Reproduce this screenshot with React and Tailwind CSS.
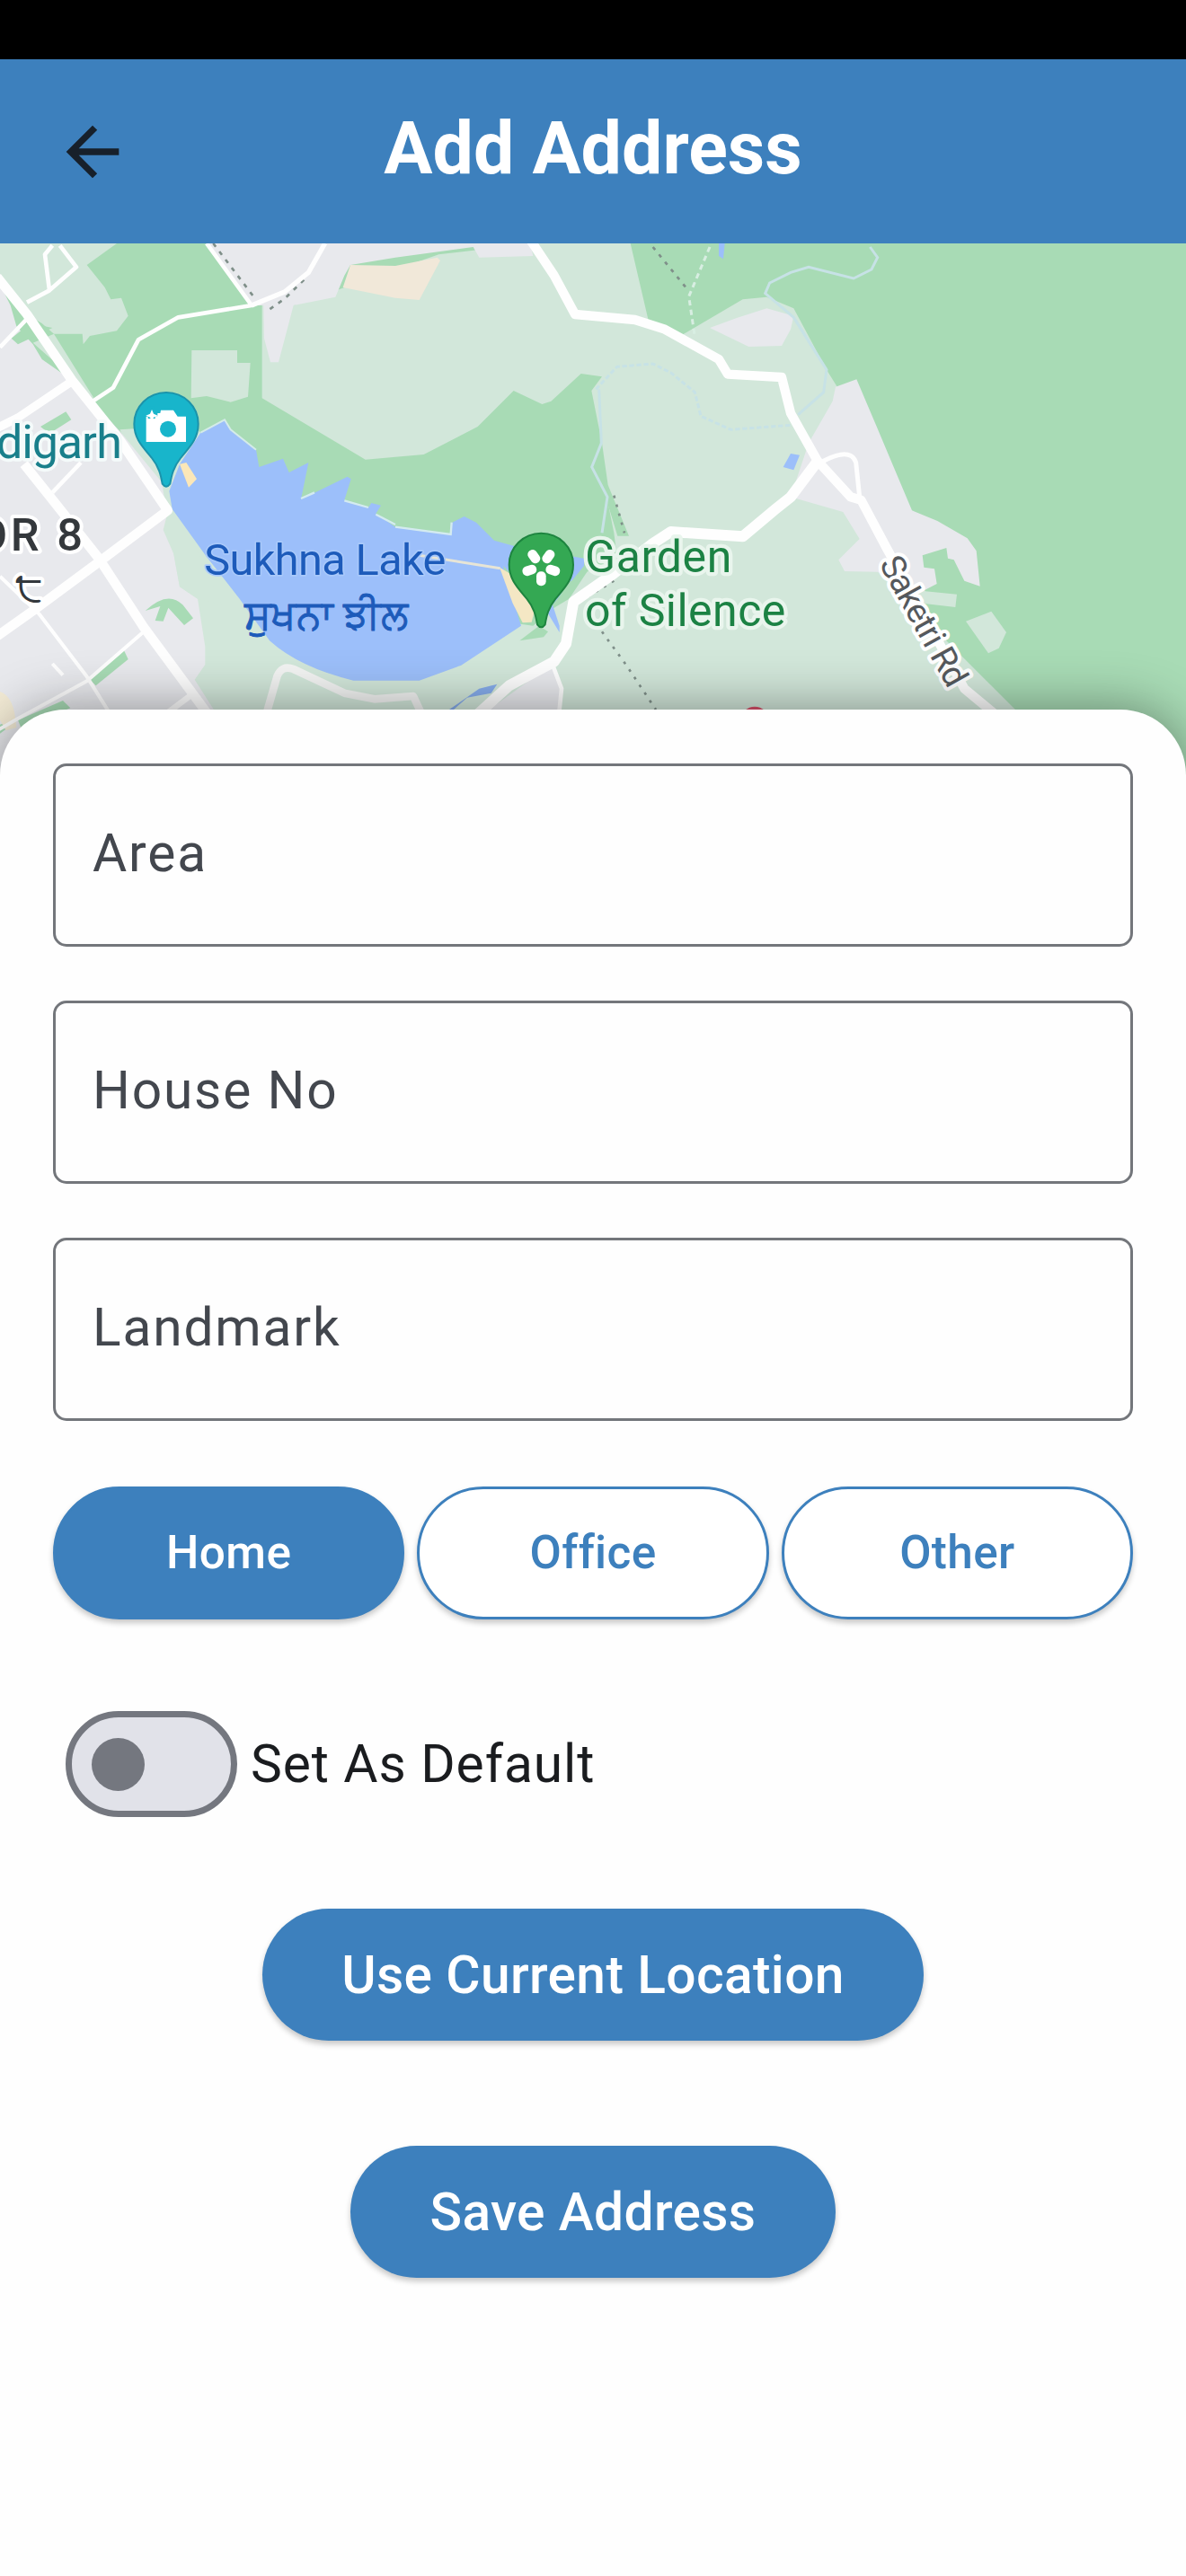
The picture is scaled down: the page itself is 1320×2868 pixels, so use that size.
const PALE = "#d2e7da";
const GREEN = "#a8dbb5";
const GRAY = "#e8e9ed";
const WATER = "#9cbffa";

function Pin({ x, y, fill, edge, children }) {
  return (
    <g transform={`translate(${x} ${y})`}>
      <path
        d="M0 -107C-60 -107 -107 -60 -107 -2C-107 50 -75 78 -48 112C-24 142 -18 168 -13 198Q0 216 13 198C18 168 24 142 48 112C75 78 107 50 107 -2C107 -60 60 -107 0 -107Z"
        fill={fill}
        stroke={edge}
        strokeWidth="6"
      />
      {children}
    </g>
  );
}

function MapView() {
  return (
    <svg
      className="block h-[600px] w-full shrink-0"
      viewBox="0 33 3960 1800"
      fontFamily="Roboto, 'Noto Sans', sans-serif"
    >
      <rect y="33" width="3960" height="1800" fill={GREEN} />

      {/* parkland */}
      <g fill={PALE}>
        <path d="M0 33H390L290 105L350 180L370 220L405 215L428 275L390 325L300 342L278 370L275 335L180 335L140 300L90 270L0 150Z" />
        <path d="M640 390H792V432H836L828 545L770 563L690 543L638 550Z" />
        <path d="M875 550V240H980L1465 70L1780 33H2105L2165 290L2275 340L2480 220L2560 212L2650 250L2760 455L2800 520L2880 900L3020 1120L3090 1195L3195 1205L3190 1248L3080 1235L3150 1350L3290 1490L3420 1620V1833H560V1000L400 655L640 640L670 665L700 850L1000 1200L1780 1310L1850 1250L1960 1130L2060 1080L2050 1000L2010 800V700L1975 525L2010 478L1940 468L1840 560L1810 570L1715 525L1595 645L1415 738L1220 755Z" />
        <path d="M3225 1295L3310 1262L3360 1332L3335 1385L3300 1402Z" />
      </g>
      <path d="M2010 700L1978 780L2030 905L2062 1010L2100 1010L2030 840Z" fill={GREEN} />

      {/* built-up areas */}
      <g fill={GRAY}>
        <path d="M0 170L35 240L55 310L110 370L140 420L240 490L400 660L540 830L580 1070L600 1180L660 1220L685 1380L685 1440L650 1490L720 1600V1833H0Z" />
        <path d="M690 33L840 240H880L882 350L903 430H930L980 240L1120 212L1150 140L1170 105L1320 80L1580 45L1600 80L1780 75L1770 33Z" />
        <path d="M2370 315L2460 282L2560 250L2650 275L2640 320L2610 375L2500 378Z" />
        <path d="M2790 512L2860 487L2925 640L3045 925L3130 960L3230 1018L3260 1060L3272 1178L3220 1160L3185 1090L3165 1085L3160 1050L3080 1075L3085 1115L3120 1120L3128 1170L3070 1200L2930 1130L2820 1128L2800 1090L2870 1020L2815 930L2640 880L2700 700L2780 560Z" />
        <path d="M1840 1440L1875 1520L1865 1833H1560L1620 1600Z" />
      </g>
      <path d="M110 365L180 335L320 560L240 480Z" fill={PALE} />
      <path d="M560 930L545 990L580 1070L600 1180L660 1220L740 1240L600 930Z" fill={PALE} />
      <g fill={GREEN}>
        <path d="M38 350L100 300L175 315L60 370Z" />
        <path d="M135 645L220 595L238 622L165 668Z" />
        <path d="M485 1260Q560 1190 610 1240L645 1285L615 1308L562 1250L545 1295L518 1293L535 1245Z" />
        <path d="M300 1490L412 1388L428 1422L320 1510Z" />
        <path d="M60 1625L210 1560L235 1585L70 1650Z" />
        <path d="M0 1640L25 1630L20 1655L0 1670Z" />
      </g>
      <path d="M1170 105L1320 108L1460 80L1470 90L1400 222L1320 215L1145 180Z" fill="#f1e8d9" />
      <path d="M0 1530Q40 1545 50 1610L55 1650L20 1660L0 1625Z" fill="#f3ebd5" />

      {/* lake */}
      <path
        d="M750 620L670 665L600 770L565 860L575 920L690 1080L800 1220L900 1360Q1000 1450 1180 1493H1400L1540 1442L1740 1310L1680 1110L1770 1200L1830 1270L1868 1332V1310L1845 1240L1950 1110L1950 1085L1720 1045L1650 1025L1590 965L1550 945L1510 965L1505 1005L1320 980L1255 935L1272 908L1240 900L1230 915L1150 890L1172 820L1160 812L1005 888L1030 765L965 798L945 752L865 780L855 722L770 655Z"
        fill={WATER}
      />
      <path d="M670 665L750 622L770 655L855 722" fill="none" stroke="#d4ebe8" strokeWidth="6" />
      <path d="M1005 885L1050 865M1150 892L1230 915M1255 938L1320 972M1320 980L1505 1005L1508 965" fill="none" stroke="#d4ebf0" strokeWidth="7" />
      <path d="M1500 1590L1600 1520L1660 1505L1640 1535L1560 1550L1515 1590Z" fill="#86aceb" />
      <path d="M1670 1118L1400 1075" stroke="#e7e5d6" strokeWidth="9" />
      <path d="M1668 1115L1712 1235L1745 1300L1775 1298L1790 1240L1710 1140Z" fill="#f4e7c4" />
      <path d="M600 770L622 765L657 820L630 848Z" fill="#fbe7b8" />
      <path d="M1735 1360L1800 1310L1830 1330L1815 1348Z" fill={GREEN} />
      <path d="M1890 1170L1960 1130L1900 1220L1850 1250Z" fill={GREEN} />
      <path d="M2640 735L2670 740L2650 790L2615 780Z" fill={WATER} />
      <path d="M2400 33H2420L2415 85L2400 75Z" fill={WATER} />

      {/* streams */}
      <g fill="none" stroke="#c7e2e6" strokeWidth="9">
        <path d="M2905 45L2930 80L2910 120L2850 150L2700 112L2640 130L2570 165L2555 200L2650 280L2760 455L2750 530L2665 605" />
        <path d="M1990 520L2060 445L2180 435L2240 465L2320 530L2340 610L2440 655L2640 640" strokeDasharray="16 8" />
        <path d="M2000 520L2008 700L1976 780L2028 880L2010 1000" />
      </g>

      {/* railway lines and trails */}
      <g fill="none" stroke="#7f8f89" strokeWidth="8">
        <path d="M712 33L850 215M1015 155L950 218L890 260" strokeDasharray="14 20" />
        <path d="M2180 45L2290 180" strokeDasharray="12 20" />
        <path d="M2050 875L2085 1000M2050 1160L1900 1250M2010 1330L2090 1440L2190 1590" strokeDasharray="9 22" />
      </g>
      <path d="M2370 45L2300 210L2320 345" fill="none" stroke="#d8eee2" strokeWidth="9" strokeDasharray="18 14" />

      {/* roads */}
      <g fill="none" stroke="#fefefe" strokeLinejoin="round">
        <path d="M-10 145L90 270L240 490L400 690L560 925L340 1090L110 1260L-10 1345" strokeWidth="32" />
        <path d="M245 490L60 615L-10 650" strokeWidth="28" />
        <path d="M80 770L180 895L330 1085L480 1315L690 1600" strokeWidth="32" />
        <path d="M175 865L270 765" strokeWidth="14" />
        <path d="M0 380L90 285M90 230L165 190L255 112L200 40M165 190L150 70L175 40" strokeWidth="14" />
        <path d="M310 560L378 515L462 355L595 280L840 240L690 33" strokeWidth="14" />
        <path d="M840 240L950 195L1030 130L1085 33" strokeWidth="16" />
        <path d="M0 1145L130 1270L290 1480L365 1600M480 1330L290 1495L60 1620L-10 1660" strokeWidth="12" />
        <path d="M175 1437L210 1475" strokeWidth="12" />
        <path d="M560 1600L640 1540" strokeWidth="20" />
        <path d="M885 1620L925 1480Q940 1440 980 1455L1150 1535L1250 1555L1380 1545L1415 1620" strokeWidth="26" stroke="#f3f4f3" />
        <path d="M1770 20L1850 140L1920 270L2120 288L2220 320L2400 420L2430 470L2610 480L2640 600L2730 760L2840 880L2875 890L2960 1050L3220 1520L3340 1620" strokeWidth="31" />
        <path d="M2740 765Q2840 710 2858 765L2870 880" strokeWidth="15" />
        <path d="M2730 760L2640 880L2590 920L2480 1012L2240 996L2180 1035L2050 1135L1915 1230L1890 1370L1850 1430L1700 1510L1590 1610" strokeWidth="36" />
        <path d="M1845 1440L1875 1520L1865 1620" strokeWidth="14" />
      </g>
      <circle cx="2520" cy="1626" r="46" fill="#d85069" />

      <Pin x={555} y={638} fill="#18b5cb" edge="#1b93ab">
        <path d="M-67 -27H-36V-38H-20L-18 -48H24L38 -27H66V58H-67Z" fill="#fff" />
        <path d="M-49 -60V-20M-69 -40H-29" stroke="#18b5cb" strokeWidth="24" />
        <path d="M-48 -50L-42 -36L-28 -30L-42 -24L-48 -10L-54 -24L-68 -30L-54 -36Z" fill="#fff" />
        <circle cx="6" cy="15" r="27" fill="#18b5cb" />
      </Pin>
      <Pin x={1807} y={1108} fill="#34a853" edge="#1d843f">
        {[36, 108, 180, 252, 324].map((a) => (
          <rect key={a} x="-16" y="-65" width="32" height="48" rx="15" fill="#fff" transform={`translate(0 4) rotate(${a})`} />
        ))}
      </Pin>

      {/* place names */}
      <g paintOrder="stroke" strokeLinejoin="round">
        <text x="-12" y="750" textLength="420" fontSize="156" fill="#197f8b" stroke="#f4fafa" strokeWidth="22">digarh</text>
        <text x="-80" y="1059" textLength="356" fontSize="152" fontWeight="500" fill="#34383c" stroke="#fff" strokeWidth="24">OR 8</text>
        <text x="50" y="1228" fontSize="140" fontWeight="500" fill="#34383c" stroke="#fff" strokeWidth="24">੮</text>
        <text x="682" y="1140" fontSize="146" textLength="807" fill="#1d5bba" stroke="#a9c9fa" strokeWidth="10">Sukhna Lake</text>
        <text x="815" y="1321" fontSize="134" textLength="545" lengthAdjust="spacingAndGlyphs" fill="#1d5bba" stroke="#1d5bba" strokeWidth="3">ਸੁਖਨਾ ਝੀਲ</text>
        <g fill="#1c8244" stroke="#e9f5ed" strokeWidth="26" fontSize="150">
          <text x="1953" y="1130" textLength="490">Garden</text>
          <text x="1953" y="1311" textLength="670">of Silence</text>
        </g>
        <text transform="translate(2934 1103) rotate(61)" fontSize="114" textLength="480" fill="#55595d" stroke="#fff" strokeWidth="24">Saketri Rd</text>
      </g>
    </svg>
  );
}

function Field({ label }) {
  return (
    <label className="flex h-[204px] items-center rounded-[15px] border-[3.67px] border-[#73767b] pb-[4px] pl-[41px] text-[58.67px] tracking-[1.83px] text-[#43474e]">
      {label}
    </label>
  );
}

const elevated = "shadow-[0_4px_6px_rgba(0,0,0,0.22)]";

function Choice({ label, selected }) {
  return (
    <button
      className={`h-[148px] flex-1 rounded-full border-[3.67px] border-[#3d80bd] text-[51.3px] font-medium tracking-[0.37px] ${elevated} ${
        selected ? "bg-[#3d80bd] text-white" : "bg-white text-[#3d80bd]"
      }`}
    >
      {label}
    </button>
  );
}

export default function App() {
  return (
    <div className="flex h-[2868px] w-[1320px] flex-col overflow-hidden bg-white font-[Roboto,sans-serif]">
      <div className="h-[66px] shrink-0 bg-black" />
      <header className="grid h-[205px] shrink-0 grid-cols-[1fr_auto_1fr] items-center bg-[#3d80bd]">
        <svg className="ml-[59px] h-[88px] w-[88px]" viewBox="0 0 24 24" fill="#17202b">
          <path d="M20 11H7.83l5.59-5.59L12 4l-8 8 8 8 1.41-1.41L7.83 13H20v-2z" />
        </svg>
        <h1 className="pb-[4px] text-[80.67px] leading-none font-bold text-white">Add Address</h1>
      </header>
      <MapView />
      <main className="relative -mt-[81px] flex flex-1 flex-col rounded-t-[73px] bg-[#fefefe] px-[59px] pt-[60px] shadow-[0_0_60px_rgba(0,0,0,0.42)]">
        <div className="flex flex-col gap-[60px]">
          <Field label="Area" />
          <Field label="House No" />
          <Field label="Landmark" />
        </div>
        <div className="mt-[73px] flex gap-[14px]">
          <Choice label="Home" selected />
          <Choice label="Office" />
          <Choice label="Other" />
        </div>
        <div className="mt-[102px] ml-[14px] flex items-center">
          <div className="flex h-[118px] w-[191px] items-center rounded-full border-[7.33px] border-[#74777f] bg-[#e1e2e9] pl-[22px]">
            <div className="h-[59px] w-[59px] rounded-full bg-[#74777f]" />
          </div>
          <span className="ml-[15px] text-[58.67px] leading-none tracking-[0.92px] text-[#1a1c1f]">Set As Default</span>
        </div>
        <div className="mt-[102px] flex flex-col items-center gap-[117px] text-[58.67px] font-medium tracking-[0.37px] text-white">
          <button className={`h-[147px] w-[736px] rounded-full bg-[#3d80bd] ${elevated}`}>Use Current Location</button>
          <button className={`h-[147px] w-[540px] rounded-full bg-[#3d80bd] ${elevated}`}>Save Address</button>
        </div>
      </main>
    </div>
  );
}
